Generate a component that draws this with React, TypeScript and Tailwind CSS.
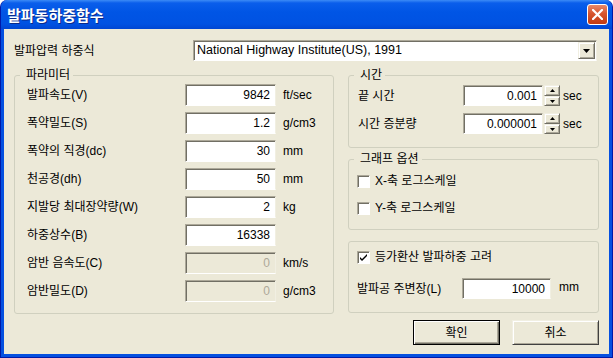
import React from "react";
import clsx from "clsx";

const ui = "font-['Liberation_Sans','Noto_Sans_CJK_KR',sans-serif] text-[12px] text-black";

const params = [
  { label: "발파속도(V)", value: "9842", unit: "ft/sec" },
  { label: "폭약밀도(S)", value: "1.2", unit: "g/cm3" },
  { label: "폭약의 직경(dc)", value: "30", unit: "mm" },
  { label: "천공경(dh)", value: "50", unit: "mm" },
  { label: "지발당 최대장약량(W)", value: "2", unit: "kg" },
  { label: "하중상수(B)", value: "16338", unit: "" },
  { label: "암반 음속도(C)", value: "0", unit: "km/s", disabled: true },
  { label: "암반밀도(D)", value: "0", unit: "g/cm3", disabled: true },
];

const Edit = ({ value, className, disabled }: { value: string; className: string; disabled?: boolean }) => (
  <div
    className={clsx(
      "flex items-center justify-end pr-[5px] border border-t-[#ACA899] border-l-[#ACA899] border-b-white border-r-[#F1EFE2] shadow-[inset_1px_1px_0_#716F64]",
      disabled ? "bg-[#ECE9D8] text-[#ACA899]" : "bg-white text-black",
      className
    )}
  >
    {value}
  </div>
);

const raised =
  "bg-[#ECE9D8] border border-t-[#F1EFE2] border-l-[#F1EFE2] border-b-[#716F64] border-r-[#716F64] shadow-[inset_1px_1px_0_#FFFFFF,inset_-1px_-1px_0_#ACA899]";

const Spin = () => (
  <div className="ml-[1px] flex h-[21px] w-[16px] flex-col">
    <div className={clsx(raised, "flex h-[11px] items-center justify-center")}>
      <svg width="5" height="3" viewBox="0 0 5 3">
        <path d="M2.5 0 L5 3 L0 3 Z" fill="#000" />
      </svg>
    </div>
    <div className={clsx(raised, "flex h-[10px] items-center justify-center")}>
      <svg width="5" height="3" viewBox="0 0 5 3">
        <path d="M0 0 L5 0 L2.5 3 Z" fill="#000" />
      </svg>
    </div>
  </div>
);

const Check = ({ checked }: { checked?: boolean }) => (
  <div className="flex h-[13px] w-[13px] shrink-0 items-center justify-center border border-t-[#ACA899] border-l-[#ACA899] border-b-white border-r-white bg-white shadow-[inset_1px_1px_0_#716F64]">
    {checked && (
      <svg width="7" height="7" viewBox="0 0 7 7">
        <path d="M0 3 L0 5 L2 7 L7 2 L7 0 L2 5 Z" fill="#000" />
      </svg>
    )}
  </div>
);

const Legend = ({ children }: { children: React.ReactNode }) => (
  <legend className="ml-[5px] pl-[6px] pr-[3px] leading-[12px]">{children}</legend>
);

export default function App() {
  return (
    <div className={clsx(ui, "flex h-[358px] w-[613px] flex-col rounded-t-[7px] bg-[#0550E0] border-x border-b border-[#0019A8]")}>
      <div className="flex h-[29px] shrink-0 items-center justify-between rounded-t-[7px] bg-[linear-gradient(#3C8BF6_0px,#0A5EEB_3px,#0055E5_12px,#0052E2_24px,#0046D2_29px)] pl-[6px] pr-[4px]">
        <span className="font-['Noto_Sans_CJK_KR',sans-serif] text-[15px] font-bold leading-none text-white [text-shadow:1px_1px_0_#0B2A8A]">
          발파동하중함수
        </span>
        <div className="flex h-[21px] w-[21px] items-center justify-center rounded-[3px] border border-white bg-[linear-gradient(#E9896A,#D6552F_45%,#C13A12)]">
          <svg width="11" height="11" viewBox="0 0 11 11">
            <path d="M1 1 L10 10 M10 1 L1 10" stroke="#fff" strokeWidth="2.2" strokeLinecap="square" />
          </svg>
        </div>
      </div>

      <div className="mx-[3px] mb-[3px] flex flex-1 flex-col bg-[#ECE9D8] pl-[10px] pr-[10px] pt-[11px]">
        <div className="flex h-[21px] items-center">
          <span className="w-[179px]">발파압력 하중식</span>
          <div className="flex h-[21px] w-[404px] items-center justify-between border border-t-[#ACA899] border-l-[#ACA899] border-b-white border-r-[#F1EFE2] bg-white pl-[3px] pr-[1px] shadow-[inset_1px_1px_0_#716F64]">
            <span className="text-[12.5px]">National Highway Institute(US), 1991</span>
            <div className={clsx(raised, "flex h-[17px] w-[17px] items-center justify-center")}>
              <svg width="7" height="4" viewBox="0 0 7 4">
                <path d="M0 0 L7 0 L3.5 4 Z" fill="#000" />
              </svg>
            </div>
          </div>
        </div>

        <div className="mt-[8px] flex gap-[14px]">
          <fieldset className="w-[320px] rounded-[3px] border border-[#D0D0BF] pb-[11px]">
            <Legend>파라미터</Legend>
            <div className="flex flex-col gap-[6px] pl-[12px] pt-[3px]">
              {params.map((p) => (
                <div key={p.label} className="flex h-[22px] items-center">
                  <span className="w-[158px]">{p.label}</span>
                  <Edit value={p.value} disabled={p.disabled} className="h-[22px] w-[91px]" />
                  <span className="ml-[7px]">{p.unit}</span>
                </div>
              ))}
            </div>
          </fieldset>

          <div className="flex w-[251px] flex-col">
            <fieldset className="rounded-[3px] border border-[#D0D0BF] pb-[13px]">
              <Legend>시간</Legend>
              <div className="flex flex-col gap-[7px] pl-[9px] pt-[4px]">
                <div className="flex h-[21px] items-center">
                  <span className="w-[105px]">끝 시간</span>
                  <Edit value="0.001" className="h-[21px] w-[80px] text-[#000040]" />
                  <Spin />
                  <span className="ml-[3px]">sec</span>
                </div>
                <div className="flex h-[21px] items-center">
                  <span className="w-[105px]">시간 증분량</span>
                  <Edit value="0.000001" className="h-[21px] w-[80px] text-[#000040]" />
                  <Spin />
                  <span className="ml-[3px]">sec</span>
                </div>
              </div>
            </fieldset>

            <fieldset className="mt-[5px] rounded-[3px] border border-[#D0D0BF] pb-[14px]">
              <Legend>그래프 옵션</Legend>
              <div className="flex flex-col gap-[14px] pl-[8px] pt-[10px]">
                <div className="flex h-[13px] items-center gap-[5px] leading-[13px]">
                  <Check />
                  <span>X-축 로그스케일</span>
                </div>
                <div className="flex h-[13px] items-center gap-[5px] leading-[13px]">
                  <Check />
                  <span>Y-축 로그스케일</span>
                </div>
              </div>
            </fieldset>

            <div className="mt-[11px] flex flex-col rounded-[3px] border border-[#D0D0BF] pb-[13px] pl-[8px] pt-[9px]">
              <div className="flex h-[13px] items-center gap-[5px] leading-[13px]">
                <Check checked />
                <span>등가환산 발파하중 고려</span>
              </div>
              <div className="mt-[14px] flex h-[21px] items-center">
                <span className="w-[105px]">발파공 주변장(L)</span>
                <Edit value="10000" className="h-[21px] w-[89px]" />
                <span className="mb-[4px] ml-[8px]">mm</span>
              </div>
            </div>
          </div>
        </div>

        <div className="mt-[6px] flex justify-end gap-[12px]">
          <div className="flex h-[25px] w-[87px] items-center justify-center border border-black bg-[#ECE9D8] shadow-[inset_1px_1px_0_#FFFFFF,inset_-1px_-1px_0_#716F64,inset_-2px_-2px_0_#ACA899]">
            확인
          </div>
          <div className={clsx(raised, "flex h-[25px] w-[87px] items-center justify-center border-b-[#404040] border-r-[#404040]")}>
            취소
          </div>
        </div>
      </div>
    </div>
  );
}
